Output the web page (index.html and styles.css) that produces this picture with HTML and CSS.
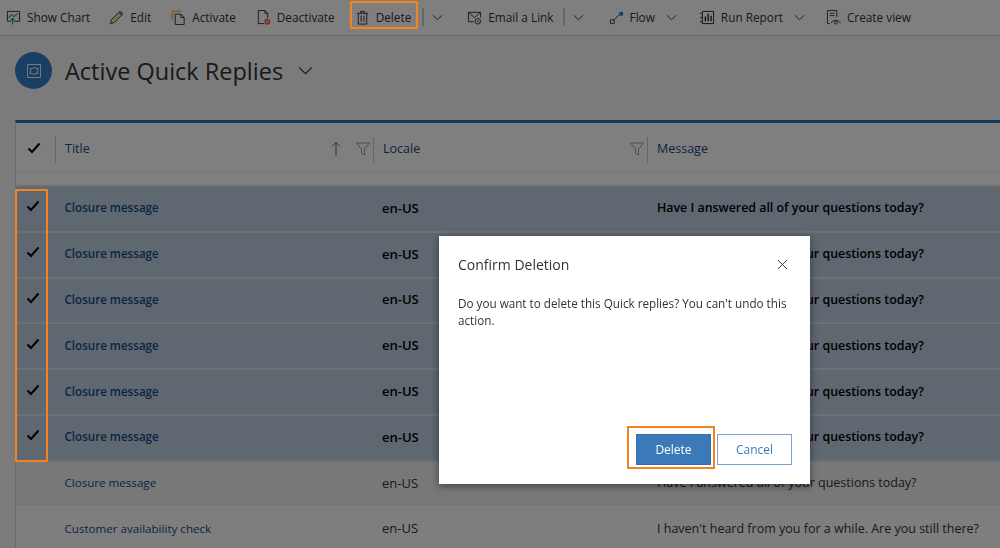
FILE: index.html
```html
<!DOCTYPE html>
<html lang="en">
<head>
    <meta charset="UTF-8">
    <meta name="viewport" content="width=device-width, initial-scale=1.0">
    <title>Active Quick Replies</title>
    <link rel="stylesheet" href="styles.css">
</head>
<body>
    <div class="toolbar">
        <span class="tool tool-chart"><svg class="ico" viewBox="0 0 16 16"><path d="M1.5 1.5h13v10.500H9M5 12H1.500V1.500" fill="none" stroke="#333"/><path d="M3 8l3-3 2.500 2L13 3.500" fill="none" stroke="#3cb468" stroke-width="1.200"/><path d="M7 15.500V9M4.800 11.200L7 9l2.200 2.200" fill="none" stroke="#2f80be" stroke-width="1.200"/></svg>Show Chart</span>
        <span class="tool tool-edit"><svg class="ico" viewBox="0 0 16 16"><path d="M1.500 14.500l1-4 8-8 3 3-8 8z" fill="#ffe9a0" stroke="#333"/><path d="M10.500 2.500l3 3 1.500-1.500-3-3z" fill="#b47ac4" stroke="#333" stroke-width=".6"/></svg>Edit</span>
        <span class="tool tool-activate"><svg class="ico" viewBox="0 0 16 16"><path d="M1.500 11V1.500H11" fill="none" stroke="#ffc060" stroke-width="2"/><path d="M4.500 4.500h6l3.500 3.500v7.500H4.500z" fill="none" stroke="#333"/><path d="M10.500 4.500V8H14" fill="none" stroke="#333"/></svg>Activate</span>
        <span class="tool tool-deact"><svg class="ico" viewBox="0 0 16 16"><path d="M8.500 14.500h-6v-14h7l3 3v5" fill="none" stroke="#333"/><path d="M9.500.5v3h3" fill="none" stroke="#333"/><circle cx="12" cy="12.500" r="2.500" fill="none" stroke="#f44c40" stroke-width="1.300"/><path d="M10.300 10.800l3.400 3.400" stroke="#f44c40" stroke-width="1.200"/></svg>Deactivate</span>
        <span class="tool tool-delete"><svg class="ico" viewBox="0 0 16 16"><path d="M2 3.500h12M6 3.500v-2h4v2M3.500 3.500v11.500h9V3.500M6.500 6v6.500M9.500 6v6.500" fill="none" stroke="#333"/></svg>Delete</span>
        <span class="tool-sep sep-a"></span>
        <svg class="chev chev-a" viewBox="0 0 12 12"><path d="M1 3.500l5 5 5-5" fill="none" stroke="#333"/></svg>
        <span class="tool tool-email"><svg class="ico" viewBox="0 0 16 16"><path d="M7 12.500H1.500v-10h13V8M1.500 2.500L8 8l6.500-5.500" fill="none" stroke="#333"/><circle cx="11.500" cy="12" r="3" fill="none" stroke="#333"/><path d="M11.500 10.500V12.500h1.500" fill="none" stroke="#333" stroke-width=".8"/></svg>Email a Link</span>
        <span class="tool-sep sep-b"></span>
        <svg class="chev chev-b" viewBox="0 0 12 12"><path d="M1 3.500l5 5 5-5" fill="none" stroke="#333"/></svg>
        <span class="tool tool-flow"><svg class="ico" viewBox="0 0 16 16"><path d="M1.500 10.500h4v4h-4zM5.500 10.500L11 5" fill="none" stroke="#333"/><path d="M11 2h4v4h-4z" fill="#2f80be"/></svg>Flow</span>
        <svg class="chev chev-c" viewBox="0 0 12 12"><path d="M1 3.500l5 5 5-5" fill="none" stroke="#333"/></svg>
        <span class="tool tool-report"><svg class="ico" viewBox="0 0 16 16"><path d="M2.500 1.500h12v13h-12zM0 3.500h2M0 8h2M0 12.500h2" fill="none" stroke="#222"/><path d="M5 7h1.500v5H5zM8 4h1.500v8H8zM11 6h1.500v6H11z" fill="#222"/></svg>Run Report</span>
        <svg class="chev chev-d" viewBox="0 0 12 12"><path d="M1 3.500l5 5 5-5" fill="none" stroke="#333"/></svg>
        <span class="tool tool-view"><svg class="ico" viewBox="0 0 16 16"><path d="M4 14.500H1.500v-14h10v7M4 3.500h5M4 6h5" fill="none" stroke="#333"/><path d="M5.500 14c1.500-4 8-4 10 0" fill="none" stroke="#333"/><circle cx="10.500" cy="13.500" r="1.500" fill="none" stroke="#333"/></svg>Create view</span>
    </div>

    <div class="view-head">
        <span class="view-badge"><svg viewBox="0 0 14 14" width="14" height="14"><path d="M.5.5h13v13H.5z" fill="none" stroke="#f0f6fc"/><path d="M3 4.500h2.500L7 3l1.500 1.500H11V7l-1 1 1 1.500h-2.500L7 11 5.500 9.500H3V8l1-1z" fill="none" stroke="#f0f6fc"/></svg></span>
        <h1>Active Quick Replies</h1>
        <svg class="head-chev" viewBox="0 0 14 14"><path d="M1 4l6 6 6-6" fill="none" stroke="#333"/></svg>
    </div>

    <div class="grid">
        <div class="grid-head">
            <div class="cell-check head-check"><svg class="tick" viewBox="0 0 14 12"><path d="M1.500 6.500l3.500 3.500 7.500-8.500" fill="none" stroke="#000" stroke-width="2"/></svg></div>
            <div class="col col-title"><span>Title</span>
                <svg class="sort" viewBox="0 0 10 16"><path d="M5 15V1.500M1 5.500l4-4 4 4" fill="none" stroke="#3a6ea5"/></svg>
                <svg class="filter" viewBox="0 0 14 14"><path d="M.5 1h13L8.500 7v6l-3-2V7z" fill="none" stroke="#9a9a9a"/></svg>
            </div>
            <div class="col col-locale"><span>Locale</span>
                <svg class="filter" viewBox="0 0 14 14"><path d="M.5 1h13L8.500 7v6l-3-2V7z" fill="none" stroke="#9a9a9a"/></svg>
            </div>
            <div class="col col-msg"><span>Message</span></div>
        </div>
        <div class="row selected"><div class="cell-check"><svg class="tick" viewBox="0 0 14 12"><path d="M1.500 6.500l3.500 3.500 7.500-8.500" fill="none" stroke="#000" stroke-width="2"/></svg></div><a class="c-title">Closure message</a><span class="c-locale">en-US</span><span class="c-msg">Have I answered all of your questions today?</span></div>
        <div class="row selected"><div class="cell-check"><svg class="tick" viewBox="0 0 14 12"><path d="M1.500 6.500l3.500 3.500 7.500-8.500" fill="none" stroke="#000" stroke-width="2"/></svg></div><a class="c-title">Closure message</a><span class="c-locale">en-US</span><span class="c-msg">Have I answered all of your questions today?</span></div>
        <div class="row selected"><div class="cell-check"><svg class="tick" viewBox="0 0 14 12"><path d="M1.500 6.500l3.500 3.500 7.500-8.500" fill="none" stroke="#000" stroke-width="2"/></svg></div><a class="c-title">Closure message</a><span class="c-locale">en-US</span><span class="c-msg">Have I answered all of your questions today?</span></div>
        <div class="row selected"><div class="cell-check"><svg class="tick" viewBox="0 0 14 12"><path d="M1.500 6.500l3.500 3.500 7.500-8.500" fill="none" stroke="#000" stroke-width="2"/></svg></div><a class="c-title">Closure message</a><span class="c-locale">en-US</span><span class="c-msg">Have I answered all of your questions today?</span></div>
        <div class="row selected"><div class="cell-check"><svg class="tick" viewBox="0 0 14 12"><path d="M1.500 6.500l3.500 3.500 7.500-8.500" fill="none" stroke="#000" stroke-width="2"/></svg></div><a class="c-title">Closure message</a><span class="c-locale">en-US</span><span class="c-msg">Have I answered all of your questions today?</span></div>
        <div class="row selected"><div class="cell-check"><svg class="tick" viewBox="0 0 14 12"><path d="M1.500 6.500l3.500 3.500 7.500-8.500" fill="none" stroke="#000" stroke-width="2"/></svg></div><a class="c-title">Closure message</a><span class="c-locale">en-US</span><span class="c-msg">Have I answered all of your questions today?</span></div>
        <div class="row hovered"><div class="cell-check"></div><a class="c-title">Closure message</a><span class="c-locale">en-US</span><span class="c-msg">Have I answered all of your questions today?</span></div>
        <div class="row"><div class="cell-check"></div><a class="c-title">Customer availability check</a><span class="c-locale">en-US</span><span class="c-msg">I haven't heard from you for a while. Are you still there?</span></div>
    </div>

    <div class="scrim"></div>

    <div class="dialog">
        <div class="dialog-head">
            <h2>Confirm Deletion</h2>
            <svg class="close" viewBox="0 0 12 12"><path d="M1 1l10 10M11 1L1 11" fill="none" stroke="#333"/></svg>
        </div>
        <p>Do you want to delete this Quick replies? You can't undo this action.</p>
        <div class="dialog-foot">
            <button type="button" class="btn btn-primary">Delete</button>
            <button type="button" class="btn btn-cancel">Cancel</button>
        </div>
    </div>

    <div class="mark mark-delete"></div>
    <div class="mark mark-checks"></div>
    <div class="mark mark-confirm"></div>
</body>
</html>
```

FILE: styles.css
```css
body {
    margin: 0;
    height: 548px;
    overflow: hidden;
    background: #f6f6f6;
    font-family: "Open Sans", "Noto Sans", Arial, sans-serif;
    font-size: 11.6px;
    color: #333;
}
svg {
    display: block;
    flex: none;
}

/* command bar */
.toolbar {
    display: flex;
    align-items: center;
    height: 34px;
    padding: 0 0 1px 6px;
    background: #fff;
    border-bottom: 1px solid #d0d0d0;
    font-size: 11.8px;
}
.tool {
    display: flex;
    align-items: center;
    gap: 6px;
    white-space: nowrap;
}
.ico {
    width: 15px;
    height: 15px;
}
.tool-sep {
    width: 2px;
    height: 18px;
    background: #ccc;
}
.chev {
    width: 11px;
    height: 11px;
}
.tool-edit { margin-left: 19px; }
.tool-activate { margin-left: 20px; }
.tool-deact { margin-left: 20px; }
.tool-delete { margin-left: 20px; }
.sep-a { margin-left: 11px; }
.chev-a { margin-left: 8px; }
.tool-email { margin-left: 24px; }
.sep-b { margin-left: 9px; }
.chev-b { margin-left: 8px; }
.tool-flow { margin-left: 25px; }
.chev-c { margin-left: 11px; }
.tool-report { margin-left: 23px; }
.chev-d { margin-left: 11px; }
.tool-view { margin-left: 21px; }

/* view title */
.view-head {
    display: flex;
    align-items: center;
    height: 69px;
    padding-left: 15px;
}
.view-badge {
    display: flex;
    align-items: center;
    justify-content: center;
    width: 37px;
    height: 37px;
    border-radius: 50%;
    background: #3280c8;
}
.view-head h1 {
    margin: 0 0 0 13px;
    font-size: 23.5px;
    font-weight: 400;
    color: #333;
}
.head-chev {
    width: 15px;
    height: 15px;
    margin-left: 15px;
}

/* list */
.grid {
    margin: 15px 0 0 15px;
    background: #fff;
    border-top: 3px solid #2f74b8;
    border-left: 1px solid #d8d8d8;
}
.grid-head {
    display: flex;
    height: 62px;
    border-bottom: 2px solid #dcdcdc;
    background: linear-gradient(#ececec, #ececec) 0 49px / 100% 1px no-repeat;
    color: #164a80;
    font-size: 12.5px;
}
.cell-check {
    flex: none;
    width: 39px;
}
.head-check {
    display: flex;
    align-items: center;
    justify-content: center;
    width: 36px;
    padding: 0 3px 12px 0;
}
.col {
    display: flex;
    align-items: center;
    box-sizing: border-box;
    height: 26px;
    margin-top: 14px;
    padding: 0 0 3px 9px;
    border-left: 1px solid #ccc;
}
.col-title { width: 318px; }
.col-locale { width: 274px; }
.col-msg { flex: 1; }
.sort {
    width: 10px;
    height: 16px;
    margin-left: auto;
}
.filter {
    width: 14px;
    height: 14px;
    margin-left: 15px;
    margin-right: 3px;
}
.col-locale .filter {
    margin-left: auto;
}
.tick {
    width: 14px;
    height: 12px;
}
.row {
    display: flex;
    align-items: center;
    box-sizing: border-box;
    height: 45.8px;
    padding-bottom: 2px;
    border-bottom: 2px solid #fff;
    background: #fcfcfc;
}
.row .cell-check {
    display: flex;
    justify-content: center;
    width: 33px;
    padding-right: 6px;
    margin-top: -3px;
}
.row.selected {
    background: #bfcfe0;
    border-bottom-color: #e0e0e0;
    font-weight: 600;
    color: #000;
}
.row.hovered {
    background: #f0f0f0;
}
.c-title {
    width: 327px;
    padding-left: 9.5px;
    box-sizing: border-box;
    color: #164a80;
}
.c-locale {
    width: 275px;
    font-size: 13px;
}
.c-msg {
    font-size: 12.5px;
    white-space: nowrap;
}
.selected .c-msg {
    font-size: 12.4px;
}

/* modal */
.scrim {
    position: fixed;
    inset: 0;
    background: rgba(0, 0, 0, 0.5);
}
.dialog {
    position: absolute;
    left: 439px;
    top: 236px;
    width: 371px;
    height: 248px;
    box-sizing: border-box;
    padding: 0 18px 0 19px;
    background: #fff;
    box-shadow: 0 2px 8px rgba(0, 0, 0, 0.45);
    display: flex;
    flex-direction: column;
}
.dialog-head {
    display: flex;
    align-items: center;
    justify-content: space-between;
    height: 59px;
    padding-bottom: 2px;
    box-sizing: border-box;
}
.dialog-head h2 {
    margin: 0;
    font-size: 14px;
    font-weight: 400;
    color: #333;
}
.close {
    width: 11px;
    height: 11px;
    margin-right: 4px;
}
.dialog p {
    margin: 0;
    font-size: 11.7px;
    line-height: 17px;
    color: #333;
}
.dialog-foot {
    display: flex;
    justify-content: flex-end;
    gap: 6px;
    margin-top: auto;
    padding-bottom: 19px;
}
.btn {
    width: 75px;
    height: 31px;
    box-sizing: border-box;
    font-family: inherit;
    font-size: 12px;
    padding: 0;
}
.btn-primary {
    background: #3b79b8;
    border: 1px solid #2f6fb5;
    color: #fff;
}
.btn-cancel {
    background: #fff;
    border: 1px solid #7ba3cf;
    color: #3b79b8;
}

/* orange callouts */
.mark {
    position: absolute;
    box-sizing: border-box;
    border: 2px solid #f58220;
}
.mark-delete {
    left: 350px;
    top: 1px;
    width: 68px;
    height: 28px;
}
.mark-checks {
    left: 15px;
    top: 189px;
    width: 33px;
    height: 273px;
}
.mark-confirm {
    left: 627px;
    top: 426px;
    width: 88px;
    height: 43px;
}
```
